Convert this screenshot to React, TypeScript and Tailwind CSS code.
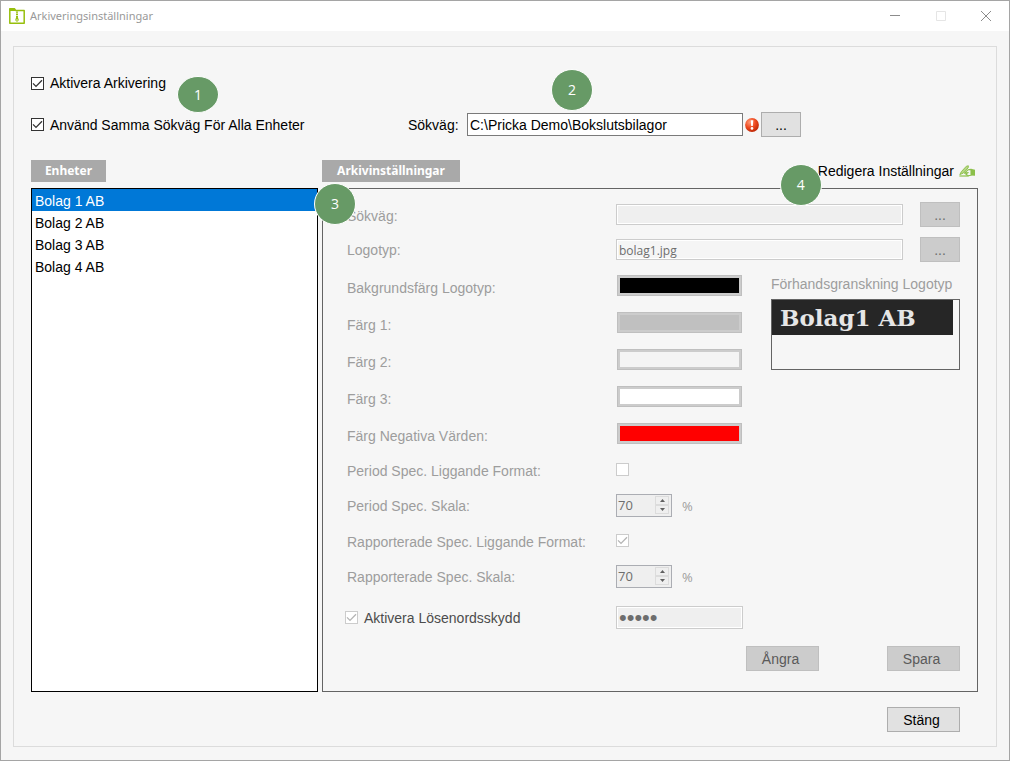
import { useState } from "react";
import type { ReactNode } from "react";

const units = ["Bolag 1 AB", "Bolag 2 AB", "Bolag 3 AB", "Bolag 4 AB"];

const colors = [
  { label: "Bakgrundsfärg Logotyp:", swatch: "bg-black" },
  { label: "Färg 1:", swatch: "bg-[#c0c0c0]" },
  { label: "Färg 2:", swatch: "bg-[#f4f4f4]" },
  { label: "Färg 3:", swatch: "bg-white" },
  { label: "Färg Negativa Värden:", swatch: "bg-[#ff0000]" },
];

const labelClass = "w-[269px] shrink-0 text-[#9d9d9d]";

function Check({ id, checked, disabled }: { id: string; checked?: boolean; disabled?: boolean }) {
  return (
    <span className="relative inline-flex h-[13px] w-[13px] shrink-0">
      <input
        id={id}
        type="checkbox"
        defaultChecked={checked}
        disabled={disabled}
        className="peer h-[13px] w-[13px] appearance-none border border-[#333333] bg-white disabled:border-[#cccccc]"
      />
      <svg
        viewBox="0 0 13 13"
        fill="none"
        stroke="currentColor"
        strokeWidth="1.3"
        aria-hidden="true"
        className="pointer-events-none absolute inset-0 hidden h-[13px] w-[13px] text-[#333333] peer-checked:block peer-disabled:text-[#b4b4b4]"
      >
        <path d="M2 6.4l3 3L11 3.2" />
      </svg>
    </span>
  );
}

function Marker({ className, children }: { className: string; children: ReactNode }) {
  return (
    <span
      className={`absolute z-10 flex w-[42px] items-center justify-center rounded-[50%] border border-white bg-[#679a66] font-['Open_Sans',sans-serif] text-[14px] leading-none text-white ${className}`}
    >
      {children}
    </span>
  );
}

function BrowseButton({ label, disabled }: { label: string; disabled?: boolean }) {
  return (
    <button
      type="button"
      aria-label={label}
      disabled={disabled}
      className="h-[25px] w-10 shrink-0 border border-[#adadad] bg-[#e1e1e1] pt-[2px] text-sm leading-[21px] text-black disabled:border-[#bfbfbf] disabled:bg-[#cccccc] disabled:text-[#6d6d6d]"
    >
      ...
    </button>
  );
}

function Spinner({ id }: { id: string }) {
  return (
    <span className="flex h-[23px] w-14 border border-[#abadb3] bg-[#efefef]">
      <input
        id={id}
        defaultValue="70"
        disabled
        className="w-[38px] min-w-0 pb-[2px] pl-px font-['Open_Sans',sans-serif] text-[13px] leading-5 text-[#6d6d6d]"
      />
      <span className="flex flex-col py-px pr-px">
        <button type="button" disabled aria-label="Öka" className="flex h-[9px] w-[14px] items-center justify-center border border-[#dcdcdc]">
          <svg viewBox="0 0 5 3" className="h-[3px] w-[5px] fill-[#606060]">
            <path d="M0 3L2.5 0L5 3z" />
          </svg>
        </button>
        <button type="button" disabled aria-label="Minska" className="flex h-[9px] w-[14px] items-center justify-center border border-[#dcdcdc]">
          <svg viewBox="0 0 5 3" className="h-[3px] w-[5px] fill-[#606060]">
            <path d="M0 0L2.5 3L5 0z" />
          </svg>
        </button>
      </span>
    </span>
  );
}

function TitleBar() {
  return (
    <header className="flex h-[30px] shrink-0 items-center bg-white pl-2">
      <svg viewBox="0 0 16 16" aria-hidden="true" className="h-4 w-4">
        <path d="M0.8 15.2V0.8H5.6L6.6 2.4H15.2V15.2z" fill="#fff" stroke="#97bf0d" strokeWidth="1.5" strokeLinejoin="round" />
        <path d="M0.5 0.5H5.6L6.6 3H0.5z" fill="#97bf0d" />
        <path d="M8 3.5V9.5" stroke="#97bf0d" strokeWidth="2" strokeDasharray="1.3 0.8" />
        <path d="M7.2 9h1.6l1 3-1 1.6H7.2l-1-1.6z" fill="#97bf0d" />
        <circle cx="8" cy="12" r="0.7" fill="#fff" />
      </svg>
      <h1 className="ml-[5px] font-['Noto_Sans',sans-serif] text-[11px] text-[#999999]">Arkiveringsinställningar</h1>
      <div className="ml-auto flex text-[#8c8c8c]">
        <button type="button" aria-label="Minimera" className="flex h-[30px] w-[46px] items-center justify-center">
          <svg viewBox="0 0 10 10" fill="none" stroke="currentColor" className="h-[10px] w-[10px]">
            <path d="M0 4.5h10" />
          </svg>
        </button>
        <button type="button" disabled aria-label="Maximera" className="flex h-[30px] w-[45px] items-center justify-center text-[#e5e5e5]">
          <svg viewBox="0 0 10 10" fill="none" stroke="currentColor" className="h-[10px] w-[10px]">
            <path d="M0.5 0.5h9v9h-9z" />
          </svg>
        </button>
        <button type="button" aria-label="Stäng fönster" className="flex h-[30px] w-[46px] items-center justify-center">
          <svg viewBox="0 0 10 10" fill="none" stroke="currentColor" className="h-[10px] w-[10px]">
            <path d="M0 0l10 10M10 0L0 10" />
          </svg>
        </button>
      </div>
    </header>
  );
}

function ArchivePanel() {
  return (
    <section className="flex min-w-0 flex-1 flex-col border border-[#646464] pt-2 pr-[17px] pb-5 pl-6">
      <div className="flex h-[35px] items-center">
        <label htmlFor="unit-path" className={`${labelClass} pt-[2px]`}>Sökväg:</label>
        <input id="unit-path" disabled className="mr-[17px] h-[21px] min-w-0 flex-1 border border-[#cccccc] bg-[#efefef] px-[2px] ring-1 ring-white ring-inset" />
        <BrowseButton label="Bläddra sökväg" disabled />
      </div>
      <div className="flex h-[35px] items-center">
        <label htmlFor="logo" className={labelClass}>Logotyp:</label>
        <input
          id="logo"
          defaultValue="bolag1.jpg"
          disabled
          className="mr-[17px] h-[21px] min-w-0 flex-1 border border-[#cccccc] bg-[#f5f5f5] px-[2px] pt-[2px] font-['Open_Sans',sans-serif] text-[12px] text-[#6d6d6d] ring-1 ring-white ring-inset"
        />
        <BrowseButton label="Bläddra logotyp" disabled />
      </div>

      <div className="flex">
        <div className="w-[396px] shrink-0">
          {colors.map((c) => (
            <div key={c.label} className="flex h-[37px] items-center">
              <span className={`${labelClass} pt-1`}>{c.label}</span>
              <button type="button" disabled aria-label={c.label} className="ml-px h-[21px] w-[125px] border border-[#bfbfbf] bg-[#cccccc] p-[2px]">
                <span className={`block h-[15px] ${c.swatch}`} />
              </button>
            </div>
          ))}
          <div className="flex h-[34px] items-center">
            <label htmlFor="period-landscape" className={`${labelClass} pt-1`}>Period Spec. Liggande Format:</label>
            <Check id="period-landscape" disabled />
          </div>
          <div className="flex h-[39px] items-center">
            <label htmlFor="period-scale" className={labelClass}>Period Spec. Skala:</label>
            <Spinner id="period-scale" />
            <span className="ml-[10px] font-['Open_Sans',sans-serif] text-[13px] text-[#9d9d9d]">%</span>
          </div>
          <div className="flex h-[30px] items-center">
            <label htmlFor="reported-landscape" className={`${labelClass} pt-1`}>Rapporterade Spec. Liggande Format:</label>
            <Check id="reported-landscape" checked disabled />
          </div>
          <div className="flex h-[43px] items-center">
            <label htmlFor="reported-scale" className={labelClass}>Rapporterade Spec. Skala:</label>
            <Spinner id="reported-scale" />
            <span className="ml-[10px] font-['Open_Sans',sans-serif] text-[13px] text-[#9d9d9d]">%</span>
          </div>
          <div className="flex h-[39px] items-center">
            <div className="-ml-[2px] flex w-[271px] items-center gap-[6px]">
              <Check id="password-on" checked disabled />
              <label htmlFor="password-on" className="text-[#4c4c4c]">Aktivera Lösenordsskydd</label>
            </div>
            <input
              type="password"
              aria-label="Lösenord"
              defaultValue="abcde"
              disabled
              className="h-[23px] min-w-0 flex-1 border border-[#cccccc] bg-[#efefef] px-[2px] text-[22px] leading-[21px] text-[#6d6d6d] ring-1 ring-white ring-inset"
            />
          </div>
        </div>

        <figure className="ml-auto w-[189px] pt-2">
          <figcaption className="text-[#9d9d9d]">Förhandsgranskning Logotyp</figcaption>
          <div className="mt-[6px] h-[71px] border border-[#646464]">
            <div className="mr-[6px] flex h-[35px] items-center bg-[#262626] pl-2 font-['DejaVu_Serif',serif] text-[23px] font-bold whitespace-nowrap text-[#e6e6e6]">
              Bolag1 AB
            </div>
          </div>
        </figure>
      </div>

      <div className="mt-auto flex justify-end gap-[68px]">
        <button type="button" disabled className="h-[25px] w-[73px] border border-[#bfbfbf] bg-[#cccccc] pr-1 text-[#5a5a5a]">Ångra</button>
        <button type="button" disabled className="h-[25px] w-[73px] border border-[#bfbfbf] bg-[#cccccc] pr-1 text-[#5a5a5a]">Spara</button>
      </div>
    </section>
  );
}

export default function App() {
  const [selected, setSelected] = useState(0);

  return (
    <div className="flex min-h-screen flex-col border border-[#a5a5a5] bg-[#f6f6f6] font-['Liberation_Sans',Arial,sans-serif] text-[14px] leading-[18px] text-black">
      <TitleBar />

      <main className="mx-3 mt-[15px] mb-[13px] flex flex-1 flex-col border border-[#dcdcdc] pr-[18px] pb-[14px] pl-[17px]">
        <div className="relative mt-[27px] flex h-[18px] items-center gap-[6px]">
          <Check id="archive-on" checked />
          <label htmlFor="archive-on">Aktivera Arkivering</label>
          <Marker className="top-[2px] left-[146px] h-[37px]">1</Marker>
        </div>

        <div className="mt-5 flex h-[25px] items-center">
          <div className="flex w-[377px] items-center gap-[6px]">
            <Check id="same-path" checked />
            <label htmlFor="same-path">Använd Samma Sökväg För Alla Enheter</label>
          </div>
          <label htmlFor="path" className="w-[59px]">Sökväg:</label>
          <div className="relative">
            <input id="path" defaultValue="C:\Pricka Demo\Bokslutsbilagor" className="h-[23px] w-[276px] border border-[#7a7a7a] bg-white px-[2px]" />
            <Marker className="-top-11 left-[84px] h-[42px]">2</Marker>
          </div>
          <svg viewBox="0 0 14 14" role="img" aria-label="Fel" className="mx-[2px] h-[14px] w-[14px]">
            <defs>
              <radialGradient id="error-fill" cx="0.35" cy="0.3" r="0.8">
                <stop offset="0" stopColor="#ff9a78" />
                <stop offset="0.5" stopColor="#ee4a20" />
                <stop offset="1" stopColor="#b52000" />
              </radialGradient>
            </defs>
            <circle cx="7" cy="7" r="6.9" fill="url(#error-fill)" />
            <path d="M5.7 2.2h2.6l-0.5 5.8H6.2z" fill="#fff" />
            <circle cx="7" cy="10.4" r="1.3" fill="#fff" />
          </svg>
          <BrowseButton label="Bläddra" />
        </div>

        <div className="mt-[23px] flex h-[22px] items-center font-['Noto_Sans',sans-serif] text-[12px] font-bold text-white">
          <h2 className="mr-[216px] w-[75px] bg-[#a9a9a9] text-center leading-[22px]">Enheter</h2>
          <h2 className="w-[138px] bg-[#a9a9a9] text-center leading-[22px]">Arkivinställningar</h2>
          <div className="relative ml-auto pr-[3px]">
            <button type="button" className="flex items-center gap-[5px] font-['Liberation_Sans',Arial,sans-serif] text-[14px] font-normal text-black">
              Redigera Inställningar
              <svg viewBox="0 0 16 13" aria-hidden="true" className="h-[13px] w-4">
                <path d="M0.8 9.6L2.4 6.6 7.4 1.2 9.4 0.8 9.2 2.8 4.2 8.2z" fill="#b5d684" stroke="#8cc04a" strokeWidth="0.9" strokeLinejoin="round" />
                <path d="M0.4 11h9.2" stroke="#8cc04a" strokeWidth="1.2" />
                <path d="M5.4 8.2L9 4.8 12 4.4v5.8L9.4 10.8 7 9.4 9.2 7.6z" fill="#f6f6f6" stroke="#8cc04a" strokeWidth="1.1" strokeLinejoin="round" />
                <path d="M12 3.8l4 1v6l-4-0.4z" fill="#8cc04a" />
              </svg>
            </button>
            <Marker className="top-[2px] -left-[38px] h-[42px] font-normal">4</Marker>
          </div>
        </div>

        <div className="relative mt-[6px] flex flex-1 gap-1">
          <ul className="w-[287px] shrink-0 border border-black bg-white">
            {units.map((unit, i) => (
              <li key={unit}>
                <button
                  type="button"
                  onClick={() => setSelected(i)}
                  className={`block h-[22px] w-full pt-[2px] pl-[3px] text-left ${i === selected ? "bg-[#0078d7] text-white" : ""}`}
                >
                  {unit}
                </button>
              </li>
            ))}
          </ul>
          <ArchivePanel />
          <Marker className="-top-[5px] left-[283px] h-[42px]">3</Marker>
        </div>

        <div className="mt-[15px] flex justify-end pr-[18px]">
          <button type="button" className="h-[25px] w-[73px] border border-[#adadad] bg-[#e1e1e1] pr-1">Stäng</button>
        </div>
      </main>
    </div>
  );
}
